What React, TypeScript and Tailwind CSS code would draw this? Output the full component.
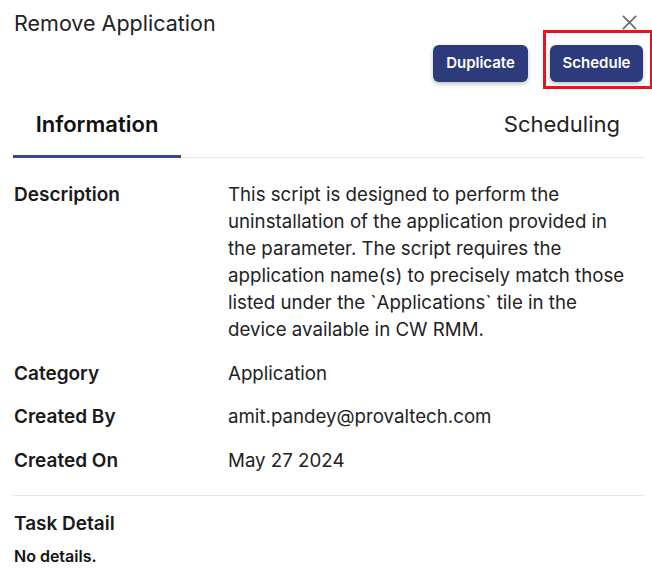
import React from "react";

const rows: { label: string; value: string }[] = [
  {
    label: "Description",
    value:
      "This script is designed to perform the uninstallation of the application provided in the parameter. The script requires the application name(s) to precisely match those listed under the `Applications` tile in the device available in CW RMM.",
  },
  { label: "Category", value: "Application" },
  { label: "Created By", value: "amit.pandey@provaltech.com" },
  { label: "Created On", value: "May 27 2024" },
];

export default function App() {
  return (
    <div
      className="relative w-[652px] h-[579px] overflow-hidden bg-white text-[#1f1f1f]"
      style={{ fontFamily: "Inter, 'Noto Sans', sans-serif" }}
    >
      {/* Header */}
      <div className="flex items-start justify-between pl-[14px] pr-[14px] pt-[9px]">
        <h2 className="text-[21.5px] leading-[28px] font-normal text-[#222]">Remove Application</h2>
        <button className="mt-[5px] text-[#6b6b6b]" aria-label="Close">
          <svg width="17" height="17" viewBox="0 0 18 18" fill="none" stroke="currentColor" strokeWidth="1.8">
            <path d="M2 2L16 16M16 2L2 16" />
          </svg>
        </button>
      </div>

      <div className="flex justify-end gap-[22px] pr-[9px] mt-[8px]">
        <button className="h-[37px] w-[95px] rounded-[6px] bg-[#2d3a7c] text-white text-[15px] font-semibold shadow-[0_2px_4px_rgba(0,0,0,0.25)]">
          Duplicate
        </button>
        <button className="h-[37px] w-[93px] rounded-[6px] bg-[#2d3a7c] text-white text-[15px] font-semibold shadow-[0_2px_4px_rgba(0,0,0,0.25)]">
          Schedule
        </button>
      </div>

      {/* annotation box */}
      <div className="absolute left-[543px] top-[30px] w-[110px] h-[59px] border-[3px] border-[#e8141b]" />

      {/* Tabs */}
      <div className="ml-[13px] mr-[8px] mt-[9px] flex justify-between border-b border-[#e6e6e6]">
        <div className="w-[168px] relative text-center text-[22px] leading-[30px] font-semibold text-[#111] pt-[18px] pb-[18px]">
          Information
          <div className="absolute left-0 right-0 bottom-[-1px] h-[3px] bg-[#35488c]" />
        </div>
        <div className="text-[22px] leading-[30px] font-normal text-[#222] pt-[18px] pb-[18px] pr-[24px]">
          Scheduling
        </div>
      </div>

      {/* Details */}
      <div className="grid grid-cols-[214px_1fr] gap-y-[16.5px] pl-[14px] pr-[16px] pt-[23px]">
        {rows.map((r) => (
          <React.Fragment key={r.label}>
            <div className="text-[19px] leading-[27px] font-semibold text-[#1a1a1a]">{r.label}</div>
            <div className="text-[18.7px] leading-[27px] text-[#222]">{r.value}</div>
          </React.Fragment>
        ))}
      </div>

      <div className="ml-[13px] mr-[8px] mt-[21px] border-t border-[#e6e6e6]" />

      <div className="pl-[14px] pt-[14px]">
        <div className="text-[19px] leading-[27px] font-semibold text-[#1a1a1a]">Task Detail</div>
        <div className="mt-[9px] text-[16px] leading-[20px] font-semibold text-[#111]">No details.</div>
      </div>
    </div>
  );
}
